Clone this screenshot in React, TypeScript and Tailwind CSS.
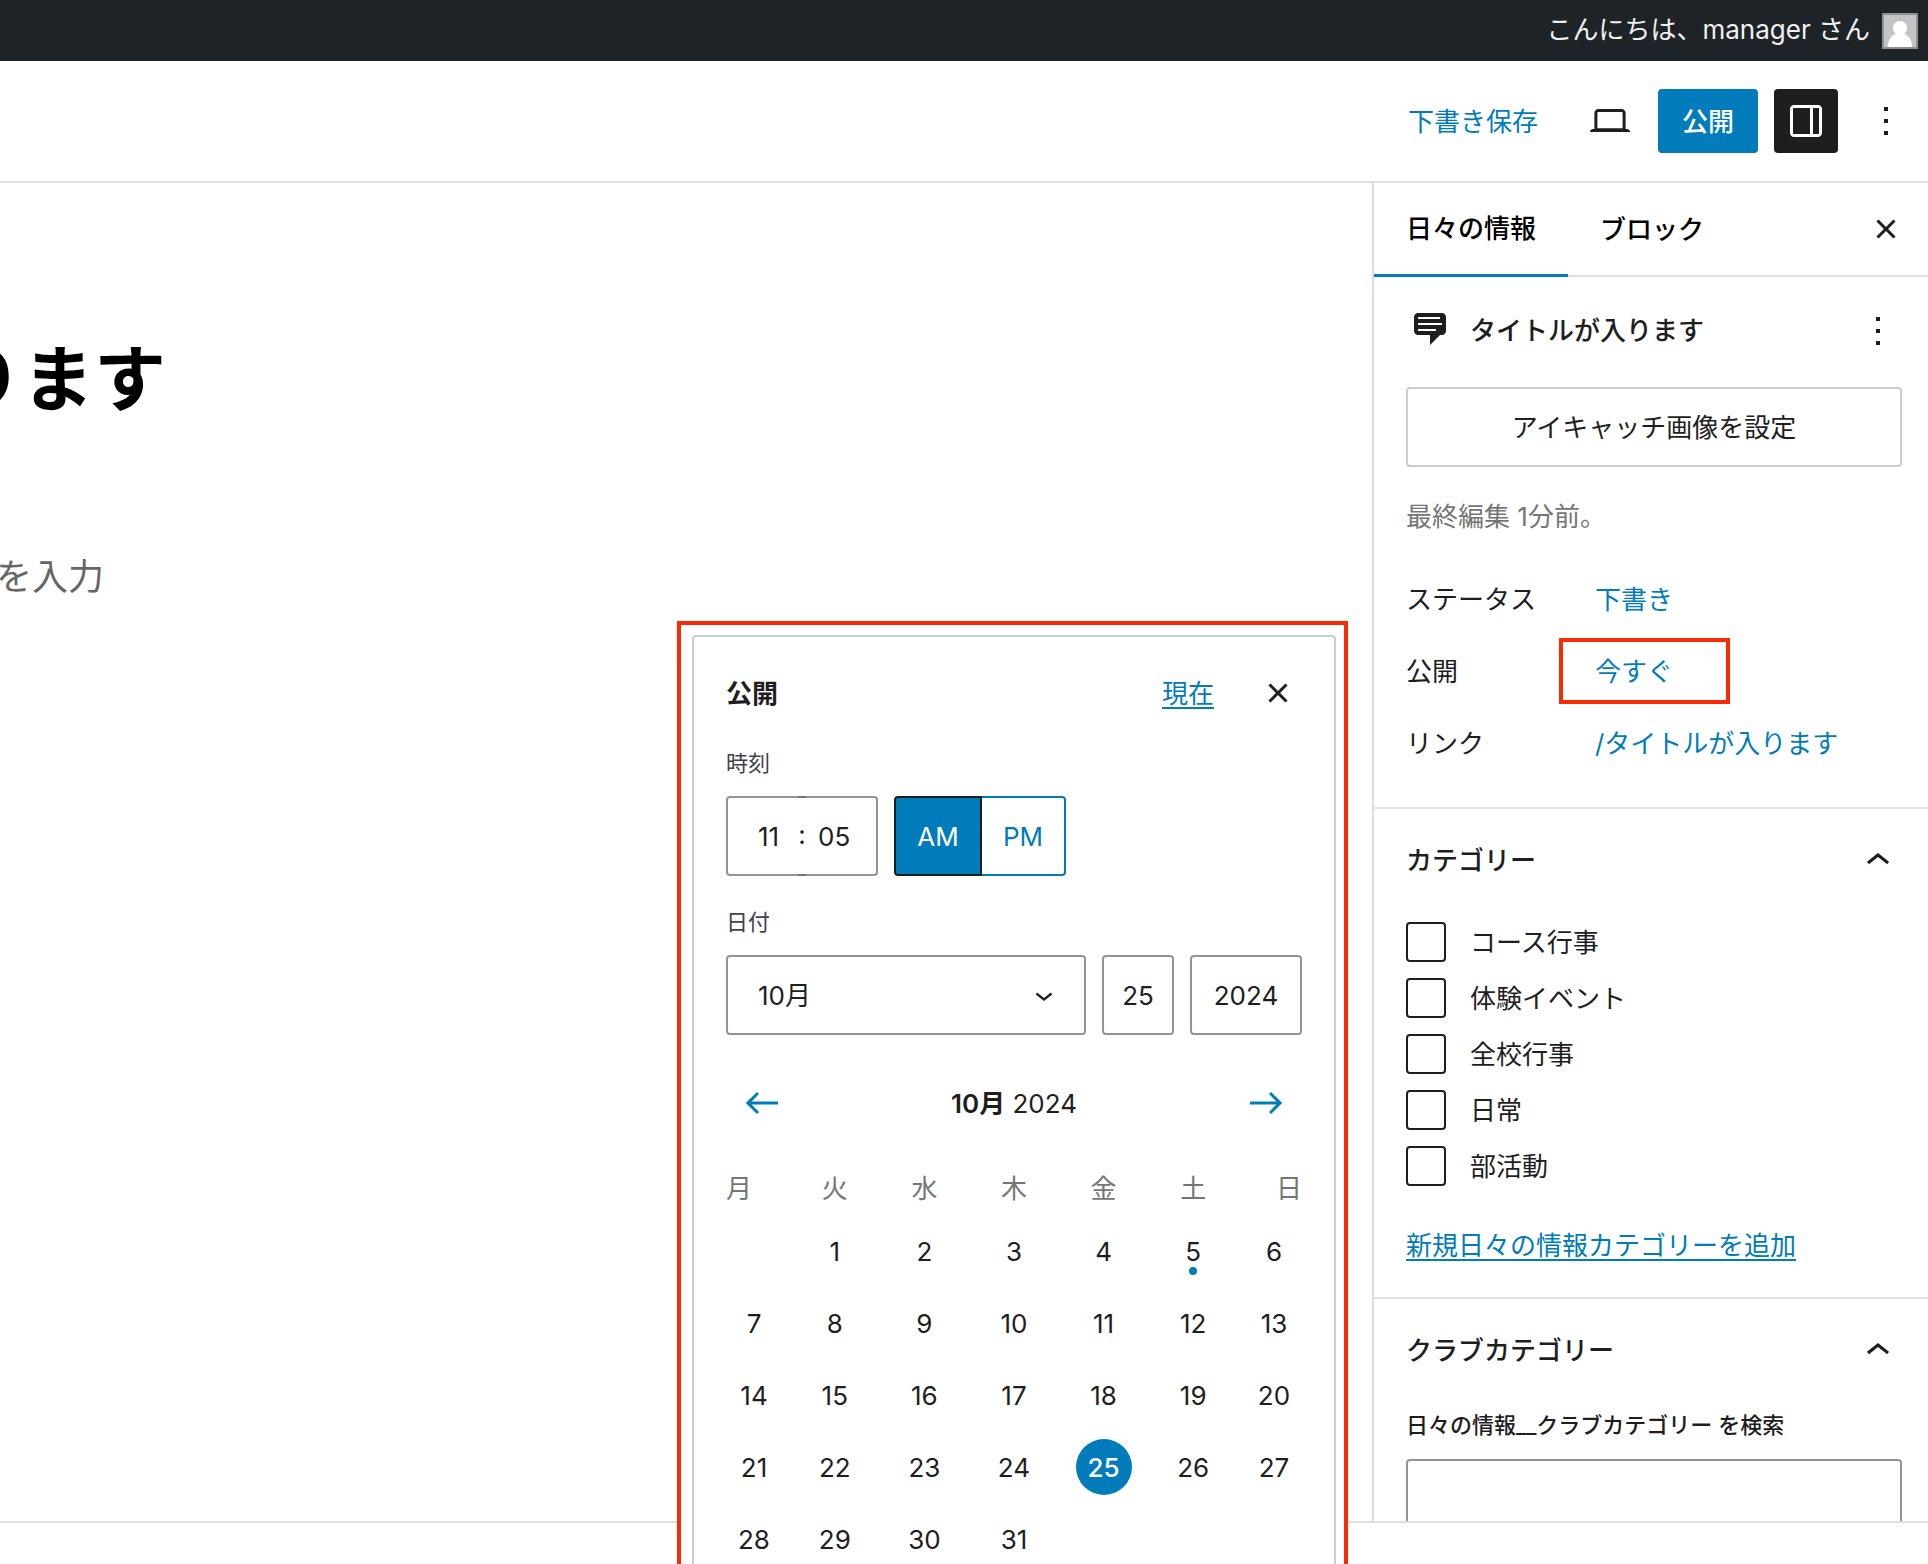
import type { ReactNode } from "react";

const ICONS = {
  laptop:
    "M20.5 16h-.7V8c0-1.1-.9-2-2-2H6.2c-1.1 0-2 .9-2 2v8h-.7c-.8 0-1.5.7-1.5 1.5h20c0-.8-.7-1.5-1.5-1.5zM5.7 8c0-.3.2-.5.5-.5h11.6c.3 0 .5.2.5.5v7.6H5.7V8z",
  drawer:
    "M18 4H6c-1.1 0-2 .9-2 2v12c0 1.1.9 2 2 2h12c1.1 0 2-.9 2-2V6c0-1.1-.9-2-2-2zm-4 14.5H6c-.3 0-.5-.2-.5-.5V6c0-.3.2-.5.5-.5h8v13zm4.5-.5c0 .3-.2.5-.5.5h-2.5v-13H18c.3 0 .5.2.5.5v12z",
  more: "M13 19h-2v-2h2v2zm0-6h-2v-2h2v2zm0-6h-2V5h2v2z",
  close:
    "M12 13.06l3.712 3.713 1.061-1.06L13.061 12l3.712-3.712-1.06-1.06L12 10.938 8.288 7.227l-1.061 1.06L10.939 12l-3.712 3.712 1.06 1.061L12 13.061z",
  up: "M6.5 12.4L12 8l5.5 4.4-.9 1.2L12 10l-4.5 3.6-1-1.2z",
  down: "M17.5 11.6L12 16l-5.5-4.4.9-1.2L12 14l4.5-3.6 1 1.2z",
  left: "M20 11.2H6.8l3.7-3.7-1-1L3.9 12l5.6 5.5 1-1-3.7-3.7H20z",
  right: "m14.5 6.5-1 1 3.7 3.7H4v1.6h13.2l-3.7 3.7 1 1 5.6-5.5z",
};

function Icon({ name, className = "size-12" }: { name: keyof typeof ICONS; className?: string }) {
  return (
    <svg viewBox="0 0 24 24" fill="currentColor" aria-hidden="true" className={className}>
      <path d={ICONS[name]} />
    </svg>
  );
}

function AdminBar() {
  return (
    <div className="flex h-[61px] shrink-0 items-center justify-end gap-3 bg-[#1d2327] pr-[10px] text-[#f0f0f1]">
      <a href="#profile" className="pb-0.5 leading-8">こんにちは、manager さん</a>
      <svg viewBox="0 0 36 36" className="size-9" aria-hidden="true">
        <rect width="36" height="36" fill="#8c8f94" />
        <rect x="2" y="2" width="32" height="32" fill="#c3c4c6" />
        <path
          d="M18 8c4.200 0 7 3 7 7 0 2.500-1.200 4.600-2.800 5.800C26.500 22.500 30 26.500 30.300 34H5.700C6 26.500 9.500 22.500 13.800 20.800 12.200 19.600 11 17.500 11 15c0-4 2.800-7 7-7z"
          fill="#fff"
        />
      </svg>
    </div>
  );
}

function EditorHeader() {
  return (
    <header className="flex h-[122px] shrink-0 items-center justify-end border-b-2 border-[#e0e0e0] pr-[18px]">
      <button className="mr-12 text-[#007cba]">下書き保存</button>
      <button aria-label="表示" className="mr-6"><Icon name="laptop" /></button>
      <button className="mr-4 h-16 rounded-sm bg-[#007cba] px-6 font-medium text-white">公開</button>
      <button aria-label="設定" className="mr-6 flex size-16 items-center justify-center rounded-sm bg-[#1e1e1e] text-white">
        <Icon name="drawer" />
      </button>
      <button aria-label="オプション"><Icon name="more" /></button>
    </header>
  );
}

function Row({ label, children }: { label: string; children: ReactNode }) {
  return (
    <div className="flex h-[72px] items-center">
      <span className="w-[189px]">{label}</span>
      {children}
    </div>
  );
}

function Panel({ title, children }: { title: string; children: ReactNode }) {
  return (
    <section className="border-t-2 border-[#e0e0e0] pr-[26px] pl-8">
      <button className="flex h-[104px] w-full items-center justify-between text-left font-medium">
        <span className="pb-0.5">{title}</span>
        <Icon name="up" />
      </button>
      {children}
    </section>
  );
}

const CATEGORIES = ["コース行事", "体験イベント", "全校行事", "日常", "部活動"];

function Sidebar() {
  return (
    <aside className="w-[556px] shrink-0 overflow-hidden border-l-2 border-[#ddd]">
      <div className="flex h-[94px] items-stretch border-b-2 border-[#ddd] pr-[18px]">
        <button className="-mb-0.5 border-b-3 border-[#007cba] px-8 font-medium text-black">日々の情報</button>
        <button className="px-8 font-medium text-black">ブロック</button>
        <button aria-label="閉じる" className="ml-auto"><Icon name="close" /></button>
      </div>

      <div className="pt-6 pr-[26px] pb-7 pl-8">
        <div className="flex h-[60px] items-start">
          <svg viewBox="0 0 20 20" fill="currentColor" className="mt-1.5 mr-5 ml-1 size-10" aria-hidden="true">
            <path d="M4 3h12c.55 0 1.02.2 1.41.59S18 4.450 18 5v7c0 .55-.2 1.020-.59 1.410S16.550 14 16 14h-1l-5 5v-5H4c-.55 0-1.020-.2-1.410-.59S2 12.550 2 12V5c0-.55.2-1.020.59-1.410S3.450 3 4 3zm11 2H4v1h11V5zm1 3H4v1h12V8zm-3 3H4v1h9v-1z" />
          </svg>
          <h2 className="flex-1 leading-[60px] font-medium">タイトルが入ります</h2>
          <button aria-label="操作" className="mt-1.5"><Icon name="more" /></button>
        </div>
        <button className="mt-[26px] h-20 w-full rounded-sm border-2 border-[#ccc]">
          アイキャッチ画像を設定
        </button>
        <p className="py-7 leading-11 text-[#757575]">最終編集 1分前。</p>
        <div className="-mt-1">
          <Row label="ステータス">
            <button className="text-[#007cba]">下書き</button>
          </Row>
          <Row label="公開">
            <div className="-ml-9 flex h-[66px] w-[171px] items-center border-4 border-[#fa2a02] pl-8">
              <button className="text-[#007cba]">今すぐ</button>
            </div>
          </Row>
          <Row label="リンク">
            <button className="text-[#007cba]">/タイトルが入ります</button>
          </Row>
        </div>
      </div>

      <Panel title="カテゴリー">
        <div className="flex flex-col gap-4 pt-[9px]">
          {CATEGORIES.map((name) => (
            <label key={name} className="flex h-10 items-center gap-6">
              <input type="checkbox" className="size-10 appearance-none rounded-sm border-2 border-[#1e1e1e] bg-white" />
              {name}
            </label>
          ))}
        </div>
        <div className="pt-10 pb-[31px]">
          <button className="leading-10 text-[#007cba] underline decoration-2 underline-offset-4">
            新規日々の情報カテゴリーを追加
          </button>
        </div>
      </Panel>

      <Panel title="クラブカテゴリー">
        <label htmlFor="club-search" className="block pt-1 pb-4 text-[22px] leading-9 font-medium">
          日々の情報__クラブカテゴリー を検索
        </label>
        <input id="club-search" type="text" className="h-20 w-full rounded-sm border-2 border-[#949494] px-4" />
      </Panel>
    </aside>
  );
}

const WEEKDAYS = ["月", "火", "水", "木", "金", "土", "日"];
const DAYS = Array.from({ length: 31 }, (_, i) => i + 1);
const FIELD = "h-20 rounded-sm border-2 border-[#949494] bg-white text-center";

function Calendar() {
  return (
    <div>
      <div className="flex h-12 items-center justify-between px-3 text-[#007cba]">
        <button aria-label="前月"><Icon name="left" /></button>
        <h3 className="text-[#1e1e1e]"><strong className="font-semibold">10月</strong> 2024</h3>
        <button aria-label="翌月"><Icon name="right" /></button>
      </div>
      <div className="mt-11 grid grid-cols-[56px_repeat(5,1fr)_56px] justify-items-center gap-4">
        {WEEKDAYS.map((day) => (
          <span key={day} className="leading-9 text-[#757575] first:justify-self-start nth-[7]:justify-self-end">
            {day}
          </span>
        ))}
        {DAYS.map((day) => (
          <button
            key={day}
            className={
              "relative size-14 rounded-full " +
              (day === 1 ? "col-start-2 " : "") +
              (day === 25 ? "bg-[#007cba] font-medium text-white" : "")
            }
          >
            {day}
            {day === 5 && <span className="absolute bottom-1 left-6 size-2 rounded-full bg-[#007cba]" />}
          </button>
        ))}
      </div>
    </div>
  );
}

function PublishPopover() {
  return (
    <div className="absolute top-[621px] right-[580px] w-[671px] border-4 border-[#fa2a02] bg-white py-[10px] pr-2 pl-[11px]">
      <div className="rounded border-2 border-[#ccc] p-8">
        <div className="flex h-12 items-center">
          <h2 className="mr-auto font-semibold">公開</h2>
          <button className="mr-10 text-[#007cba] underline decoration-2 underline-offset-4">現在</button>
          <button aria-label="閉じる"><Icon name="close" /></button>
        </div>

        <fieldset className="mt-7">
          <legend className="mb-[15px] text-[22px] leading-9 text-[#3c434a]">時刻</legend>
          <div className="flex gap-4">
            <div className="flex h-20 w-[152px] items-center rounded-sm border-2 border-[#949494]">
              <input aria-label="時" defaultValue="11" className="w-[70px] pl-[30px]" />
              <span className="flex h-20 w-2 shrink-0 items-center justify-center border-y-2 border-[#757575] pb-1">:</span>
              <input aria-label="分" defaultValue="05" className="w-[70px] pl-3" />
            </div>
            <div className="flex h-20">
              <button className="w-[88px] rounded-l-sm border-2 border-[#1e1e1e] bg-[#007cba] text-white">AM</button>
              <button className="w-[84px] rounded-r-sm border-2 border-l-0 border-[#007cba] text-[#007cba]">PM</button>
            </div>
          </div>
        </fieldset>

        <fieldset className="mt-7">
          <legend className="mb-[15px] text-[22px] leading-9 text-[#3c434a]">日付</legend>
          <div className="flex gap-4">
            <div className="relative flex-1">
              <select aria-label="月" className="h-20 w-full appearance-none rounded-sm border-2 border-[#949494] bg-white pl-[30px]">
                <option>10月</option>
              </select>
              <Icon name="down" className="pointer-events-none absolute top-[22px] right-6 size-9" />
            </div>
            <input aria-label="日" defaultValue="25" className={FIELD + " w-[72px]"} />
            <input aria-label="年" defaultValue="2024" className={FIELD + " w-28"} />
          </div>
        </fieldset>

        <div className="mt-11">
          <Calendar />
        </div>
      </div>
    </div>
  );
}

export default function App() {
  return (
    <div
      lang="ja"
      className="relative flex h-screen flex-col overflow-hidden bg-white font-[Inter,'Noto_Sans_CJK_JP',sans-serif] text-[26px] text-[#1e1e1e]"
    >
      <AdminBar />
      <EditorHeader />
      <div className="flex min-h-0 flex-1">
        <main className="flex-1 overflow-hidden">
          <div className="flex w-[166px] justify-end pt-36">
            <h1 className="shrink-0 text-[72px] leading-[104px] font-bold whitespace-nowrap text-black">ります</h1>
          </div>
          <div className="flex w-[104px] justify-end pt-[118px]">
            <p className="shrink-0 text-4xl leading-14 whitespace-nowrap text-[#666]">を入力</p>
          </div>
        </main>
        <Sidebar />
      </div>
      <footer className="h-[43px] shrink-0 border-t-2 border-[#e0e0e0]" />
      <PublishPopover />
    </div>
  );
}
